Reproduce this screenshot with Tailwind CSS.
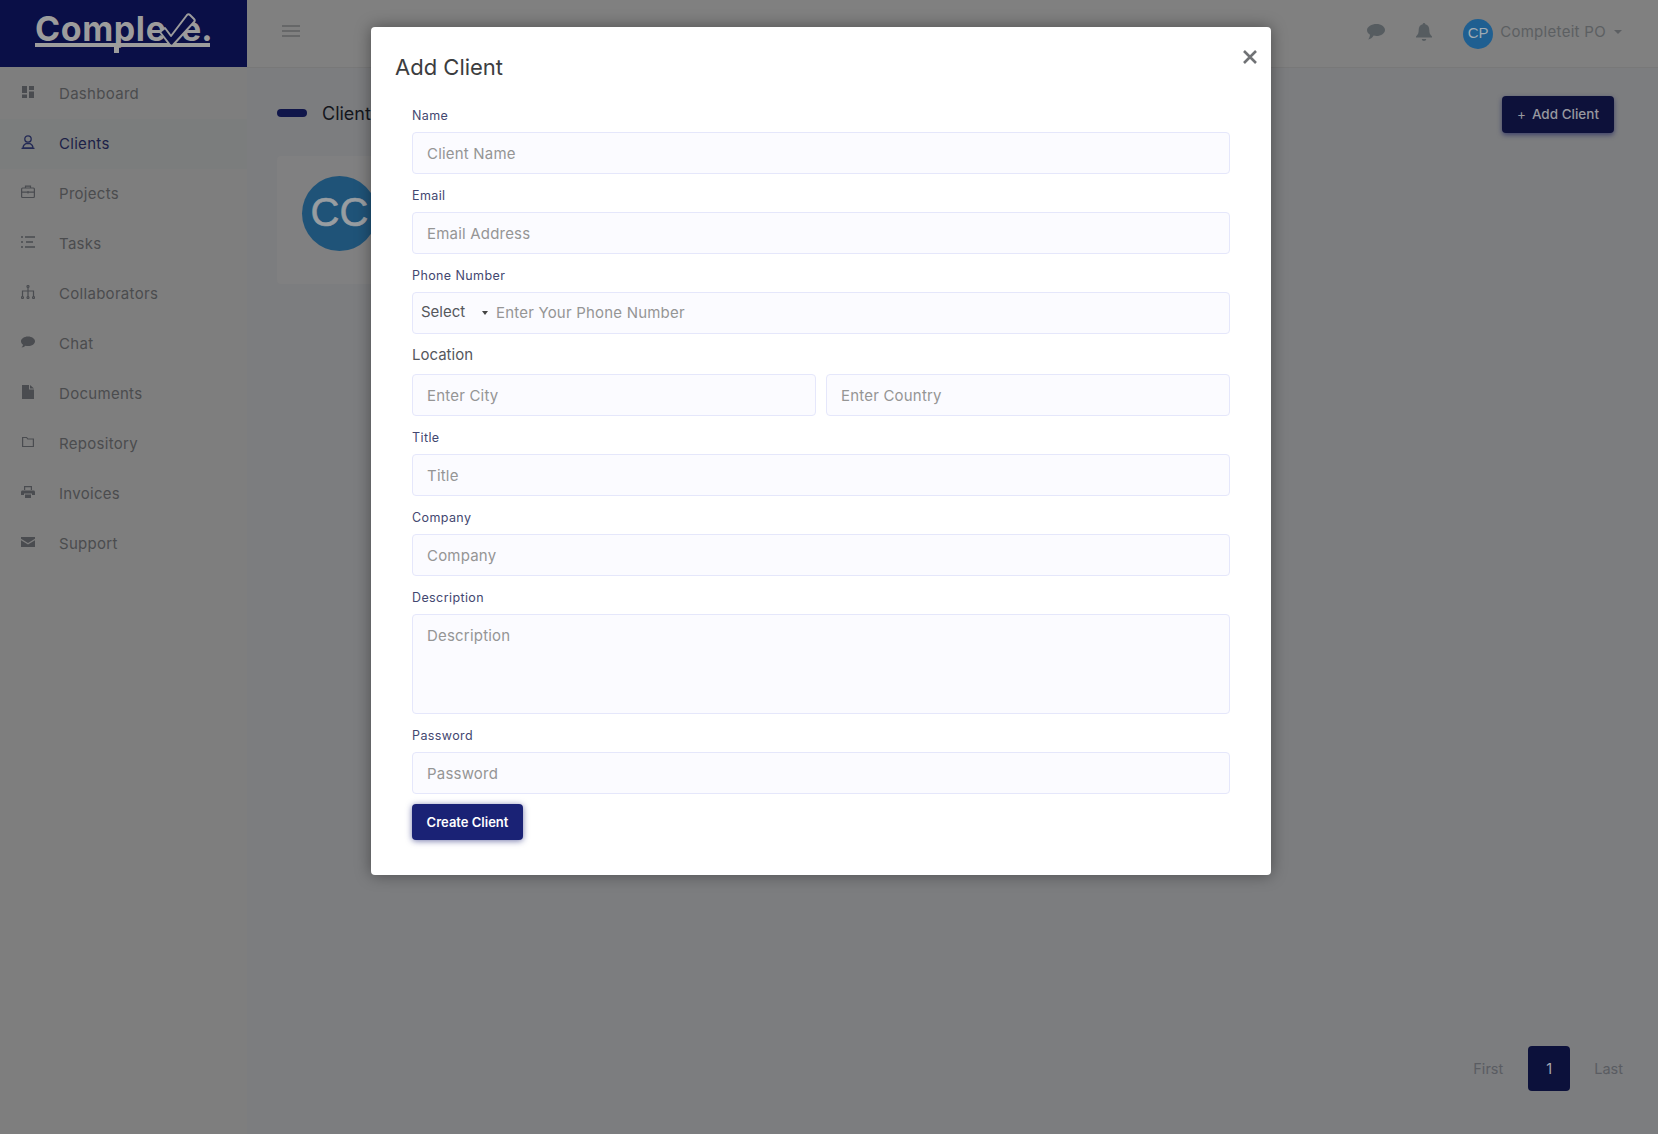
<!DOCTYPE html>
<html lang="en">
<head>
<meta charset="utf-8">
<title>Clients</title>
<script src="https://cdn.jsdelivr.net/npm/@tailwindcss/browser@4"></script>
</head>
<body class="h-[1134px] overflow-hidden bg-[#7c7d7f] font-['Inter',sans-serif]">
<div class="relative flex h-[1134px]">

  <!-- Sidebar -->
  <aside class="w-[247px] shrink-0 bg-[#7e7e7e]">
    <div class="flex h-[67px] items-start bg-[#0a0f47] pl-[35px] pt-[10px] text-[#9c9c9c]">
      <div class="relative h-[37px] w-[175px] border-b-[4px] border-[#9c9c9c]">
        <span class="absolute left-0 top-[-1px] text-[34px] leading-[40px] font-bold tracking-[0.6px]">Comple</span>
        <span class="absolute left-[146px] top-[-1px] text-[34px] leading-[40px] font-bold">e.</span>
        <svg class="absolute left-[124px] top-[3px]" width="38" height="36" viewBox="0 0 38 36" fill="#0a0f47" stroke="#9c9c9c" stroke-width="2" stroke-linejoin="round"><path d="M1 19l5-4 6 8L28 2c1-1 2-1 3 0l4 4c1 1 1 2 0 3L14 32c-1 1-2 1-3 0z"/></svg>
        <span class="absolute left-[79px] top-[33px] h-[10px] w-[5px] bg-[#9c9c9c]"></span>
      </div>
    </div>
    <nav class="pt-[2px] text-[15px] tracking-[0.3px] text-[#4b4c4e]">
      <a class="flex h-[50px] items-center">
        <svg class="mb-1 ml-[22px] mr-[25px] h-3 w-3" viewBox="0 0 12 12" fill="#4a4c50"><path d="M0 0h5v7H0zM7 0h5v4H7zM0 8.500h5V12H0zM7 5.500h5V12H7z"/></svg>Dashboard</a>
      <a class="flex h-[50px] items-center bg-[#7b7d7d] text-[#1c2147]">
        <svg class="mb-1 ml-[21px] mr-[24px] h-[14px] w-[14px]" viewBox="0 0 14 14" fill="none" stroke="#232a55" stroke-width="1.300"><circle cx="7" cy="4" r="3.200"/><path d="M2 13c0-3 2-4 3-4.500h4c1 .5 3 1.500 3 4.500zM.500 13.300h13"/></svg>Clients</a>
      <a class="flex h-[50px] items-center">
        <svg class="mb-1 ml-[21px] mr-[24px] h-[14px] w-[14px]" viewBox="0 0 14 14" fill="none" stroke="#4a4c50" stroke-width="1.200"><rect x=".6" y="3" width="12.800" height="9.500" rx="1"/><path d="M4.500 3V1.200h5V3M.6 7.200h12.800M7 6v2.500"/></svg>Projects</a>
      <a class="flex h-[50px] items-center">
        <svg class="mb-1 ml-[21px] mr-[24px] h-[14px] w-[14px]" viewBox="0 0 14 14" fill="none" stroke="#4a4c50" stroke-width="1.400"><path d="M0 2h2M4 2h10M0 7h2M5 7h7M0 12h2M4 12h10"/></svg>Tasks</a>
      <a class="flex h-[50px] items-center">
        <svg class="mb-1 ml-[21px] mr-[24px] h-[14px] w-[14px]" viewBox="0 0 14 14" fill="none" stroke="#4a4c50" stroke-width="1.200"><circle cx="7" cy="1.500" r="1"/><path d="M7 2.500V12M1.500 12V6h11v6"/><circle cx="1.500" cy="12.500" r="1"/><circle cx="7" cy="12.500" r="1"/><circle cx="12.500" cy="12.500" r="1"/></svg>Collaborators</a>
      <a class="flex h-[50px] items-center">
        <svg class="mb-1 ml-[21px] mr-[24px] h-[14px] w-[14px]" viewBox="0 0 14 14" fill="#4a4c50"><path d="M7 1.500c3.900 0 7 2.200 7 4.800s-3.100 4.800-7 4.800c-.9 0-1.700-.1-2.500-.3C3.600 11.600 2.200 12.500.6 12.500c.7-.7 1.300-1.700 1.400-2.700C.8 8.900 0 7.700 0 6.300 0 3.700 3.100 1.500 7 1.500z"/></svg>Chat</a>
      <a class="flex h-[50px] items-center">
        <svg class="mb-1 ml-[22px] mr-[25px] h-[14px] w-3" viewBox="0 0 12 14" fill="#4a4c50"><path d="M0 0h7v4.500h5V14H0zM8 0l4 3.500H8z"/></svg>Documents</a>
      <a class="flex h-[50px] items-center">
        <svg class="mb-1 ml-[22px] mr-[25px] h-3 w-3" viewBox="0 0 12 12" fill="none" stroke="#4a4c50" stroke-width="1.200"><path d="M.6 1.500h4l1.200 1.500h5.600v7.500H.6z"/></svg>Repository</a>
      <a class="flex h-[50px] items-center">
        <svg class="mb-1 ml-[21px] mr-[24px] h-[14px] w-[14px]" viewBox="0 0 14 14" fill="#4a4c50"><path d="M3 1h8v4H9.800V2.200H4.200V5H3zM1.500 5.500h11c.8 0 1.500.7 1.500 1.500v3h-3V8.500H3V10H0V7c0-.8.7-1.500 1.500-1.500zM4 9.500h6V13H4z"/></svg>Invoices</a>
      <a class="flex h-[50px] items-center">
        <svg class="mb-1 ml-[21px] mr-[24px] h-[14px] w-[14px]" viewBox="0 0 14 14" fill="#4a4c50"><path d="M0 2h14v1.800L7 8 0 3.800zM0 5.300L7 9.500l7-4.200V12H0z"/></svg>Support</a>
    </nav>
  </aside>

  <!-- Main -->
  <div class="flex min-w-0 flex-1 flex-col">
    <header class="flex h-[68px] items-center border-b border-[#787878] bg-[#808080] pl-[35px] pr-[36px] text-[#555a5e]">
      <svg class="mb-[6px]" width="18" height="12" viewBox="0 0 18 12" fill="none" stroke="#5d5f60" stroke-width="1.500"><path d="M0 1h18M0 6h18M0 11h18"/></svg>
      <div class="ml-auto flex items-center">
        <svg class="mb-[3px]" width="18" height="16" viewBox="0 0 18 16" fill="#565c60"><path d="M9.500 0C14.200 0 18 2.700 18 6s-3.800 6-8.500 6c-1 0-2-.1-2.900-.4C5.500 13.500 3.300 15.500 1 15.500c1-1 1.900-3 2-4.800C1.200 9.600 0 7.900 0 6 0 2.700 4.800 0 9.500 0z"/></svg>
        <svg class="mb-[4px] ml-[31px]" width="16" height="18" viewBox="0 0 16 18" fill="#565c60"><path d="M8 0c.8 0 1.300.6 1.300 1.300 2.800.6 4 3 4 5.700 0 3 .7 4.500 2.700 6.500v1H0v-1C2 11.500 2.700 10 2.700 7c0-2.700 1.200-5.100 4-5.700C6.700.6 7.200 0 8 0zM5.800 16h4.400c0 1.200-1 2-2.200 2s-2.200-.8-2.200-2z"/></svg>
        <div class="ml-[31px] flex h-[30px] w-[30px] items-center justify-center rounded-full bg-[#1f5f91] font-['Liberation_Sans',sans-serif] text-[15px] text-[#a0abb3]">CP</div>
        <span class="mb-[2px] ml-[7px] text-[15px] tracking-[0.3px] text-[#5c5f62]">Completeit PO</span>
        <span class="mb-[4px] ml-[8px] h-0 w-0 border-x-[4px] border-t-[4px] border-x-transparent border-t-[#5c5f62]"></span>
      </div>
    </header>
    <main class="flex min-h-0 flex-1 flex-col pl-[30px] pr-[35px]">
      <div class="mt-[28px] flex items-start justify-between pr-[9px]">
        <div class="mt-[4px] flex items-center">
          <span class="h-2 w-[30px] rounded-full bg-[#10164a]"></span>
          <span class="ml-[15px] mt-[2px] text-[18px] leading-6 text-[#14161c]">Clients</span>
        </div>
        <button class="flex h-[37px] w-[112px] items-center justify-center rounded bg-[#0d113a] text-[13.500px] font-medium text-[#97989f] shadow-[0_2px_5px_rgba(20,25,90,0.6)]"><span class="mr-[6px] font-normal">+</span>Add Client</button>
      </div>
      <div class="mt-[23px] h-[128px] w-[300px] rounded-sm bg-[#808081] pl-[25px] pt-5">
        <div class="flex h-[75px] w-[75px] items-center justify-center rounded-full bg-[#1f5378] pb-[3px] font-['Liberation_Sans',sans-serif] text-[40px] text-[#989da1] [-webkit-text-stroke:0.6px_#989da1]">CC</div>
      </div>
      <div class="mb-[43px] mt-auto flex items-center justify-end text-[14.500px] text-[#5a5c62]">
        <span class="mr-[25px]">First</span>
        <span class="flex h-[45px] w-[42px] items-center justify-center rounded-sm bg-[#0c113b] text-[#a9abb5]">1</span>
        <span class="ml-[24px]">Last</span>
      </div>
    </main>
  </div>

  <!-- Add client modal -->
  <div class="absolute left-[371px] top-[27px] h-[848px] w-[900px] rounded-[4px] bg-white shadow-[0_0_16px_rgba(0,0,0,0.4)]">
    <div class="flex items-start justify-between pl-6 pr-[14px] pt-[26px]">
      <h2 class="text-[22px] leading-7 text-[#3c3d40]">Add Client</h2>
      <svg class="mt-[-3px]" width="14" height="14" viewBox="0 0 14 14" fill="none" stroke="#707275" stroke-width="2.600"><path d="M1 1l12 12M13 1L1 13"/></svg>
    </div>
    <form class="mx-[41px] mt-[25px] flex flex-col text-[15px]">
      <label class="text-[12.500px] leading-[20px] tracking-[0.4px] text-[#434770]">Name</label>
      <input class="mt-[6px] h-[42px] rounded-[4px] border border-[#e5e7fb] bg-[#fbfbff] px-[14px] tracking-[0.2px] placeholder:text-[#959595]" placeholder="Client Name">
      <label class="mt-[12px] text-[12.500px] leading-[20px] tracking-[0.4px] text-[#434770]">Email</label>
      <input class="mt-[6px] h-[42px] rounded-[4px] border border-[#e5e7fb] bg-[#fbfbff] px-[14px] tracking-[0.2px] placeholder:text-[#959595]" placeholder="Email Address">
      <label class="mt-[12px] text-[12.500px] leading-[20px] tracking-[0.4px] text-[#434770]">Phone Number</label>
      <div class="mt-[6px] flex h-[42px] items-center rounded-[4px] border border-[#e5e7fb] bg-[#fbfbff] pl-2">
        <span class="mb-[1px] w-[61px] text-[#55575c]">Select</span>
        <span class="h-0 w-0 border-x-[3.500px] border-t-[4px] border-x-transparent border-t-[#444]"></span>
        <input class="ml-[8px] min-w-0 flex-1 bg-transparent tracking-[0.2px] placeholder:text-[#959595]" placeholder="Enter Your Phone Number">
      </div>
      <label class="mt-[11px] leading-[20px] text-[#55575c]">Location</label>
      <div class="mt-[9px] grid grid-cols-2 gap-[10px]">
        <input class="h-[42px] min-w-0 rounded-[4px] border border-[#e5e7fb] bg-[#fbfbff] px-[14px] tracking-[0.2px] placeholder:text-[#959595]" placeholder="Enter City">
        <input class="h-[42px] min-w-0 rounded-[4px] border border-[#e5e7fb] bg-[#fbfbff] px-[14px] tracking-[0.2px] placeholder:text-[#959595]" placeholder="Enter Country">
      </div>
      <label class="mt-[12px] text-[12.500px] leading-[20px] tracking-[0.4px] text-[#434770]">Title</label>
      <input class="mt-[6px] h-[42px] rounded-[4px] border border-[#e5e7fb] bg-[#fbfbff] px-[14px] tracking-[0.2px] placeholder:text-[#959595]" placeholder="Title">
      <label class="mt-[12px] text-[12.500px] leading-[20px] tracking-[0.4px] text-[#434770]">Company</label>
      <input class="mt-[6px] h-[42px] rounded-[4px] border border-[#e5e7fb] bg-[#fbfbff] px-[14px] tracking-[0.2px] placeholder:text-[#959595]" placeholder="Company">
      <label class="mt-[12px] text-[12.500px] leading-[20px] tracking-[0.4px] text-[#434770]">Description</label>
      <textarea class="mt-[6px] h-[100px] resize-none rounded-[4px] border border-[#e5e7fb] bg-[#fbfbff] px-[14px] py-[10px] tracking-[0.2px] placeholder:text-[#959595]" placeholder="Description"></textarea>
      <label class="mt-[12px] text-[12.500px] leading-[20px] tracking-[0.4px] text-[#434770]">Password</label>
      <input class="mt-[6px] h-[42px] rounded-[4px] border border-[#e5e7fb] bg-[#fbfbff] px-[14px] tracking-[0.2px] placeholder:text-[#959595]" placeholder="Password">
      <button type="button" class="mt-[10px] h-[36px] w-[111px] rounded-[4px] bg-[#1a2275] pt-[1px] text-[13px] font-semibold text-white shadow-[0_1px_6px_rgba(26,34,117,0.6)]">Create Client</button>
    </form>
  </div>
</div>
</body>
</html>
